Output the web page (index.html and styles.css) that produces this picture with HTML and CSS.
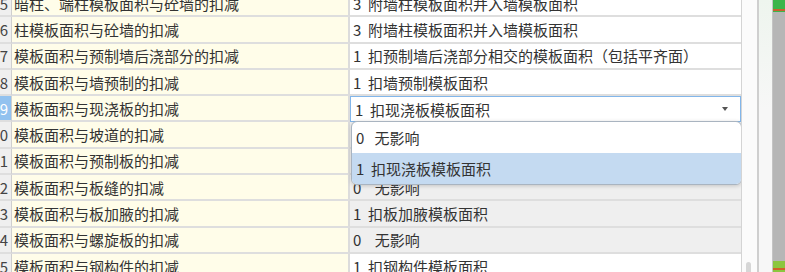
FILE: index.html
```html
<!DOCTYPE html>
<html lang="zh-CN">
<head>
<meta charset="utf-8">
<title>模板扣减设置</title>
<link rel="stylesheet" href="styles.css">
</head>
<body>
<div class="screen">
  <div class="grid">
    <div class="rows">
      <div class="row"><div class="num"><span>25</span></div><div class="name">暗柱、端柱模板面积与砼墙的扣减</div><div class="val">3  附墙柱模板面积并入墙模板面积</div></div>
      <div class="row"><div class="num"><span>26</span></div><div class="name">柱模板面积与砼墙的扣减</div><div class="val">3  附墙柱模板面积并入墙模板面积</div></div>
      <div class="row"><div class="num"><span>27</span></div><div class="name">模板面积与预制墙后浇部分的扣减</div><div class="val">1  扣预制墙后浇部分相交的模板面积（包括平齐面）</div></div>
      <div class="row"><div class="num"><span>28</span></div><div class="name">模板面积与墙预制的扣减</div><div class="val">1  扣墙预制模板面积</div></div>
      <div class="row"><div class="num active"><span>29</span></div><div class="name">模板面积与现浇板的扣减</div>
        <div class="val editing"><span class="edit-text">1  扣现浇板模板面积</span><span class="caret"></span>
          <div class="dropdown">
            <div class="opt">0   无影响</div>
            <div class="opt selected">1  扣现浇板模板面积</div>
          </div>
        </div>
      </div>
      <div class="row"><div class="num"><span>30</span></div><div class="name">模板面积与坡道的扣减</div><div class="val off">1  扣坡道模板面积</div></div>
      <div class="row"><div class="num"><span>31</span></div><div class="name">模板面积与预制板的扣减</div><div class="val off">1  扣预制板模板面积</div></div>
      <div class="row"><div class="num"><span>32</span></div><div class="name">模板面积与板缝的扣减</div><div class="val off">0    无影响</div></div>
      <div class="row"><div class="num"><span>33</span></div><div class="name">模板面积与板加腋的扣减</div><div class="val off">1  扣板加腋模板面积</div></div>
      <div class="row"><div class="num"><span>34</span></div><div class="name">模板面积与螺旋板的扣减</div><div class="val off">0    无影响</div></div>
      <div class="row"><div class="num"><span>35</span></div><div class="name">模板面积与钢构件的扣减</div><div class="val">1  扣钢构件模板面积</div></div>
    </div>
  </div>
  <div class="gutter"><div class="thumb"></div></div>
  <div class="divider"></div>
  <div class="side"></div>
  <div class="strip">
    <div class="strip-top"></div>
    <div class="strip-bottom"></div>
  </div>
</div>
</body>
</html>
```
FILE: styles.css
```css
html, body {
  margin: 0;
  padding: 0;
  background: #ffffff;
}
body {
  width: 785px;
  height: 272px;
  overflow: hidden;
  font-family: "Noto Sans CJK SC", "Microsoft YaHei", sans-serif;
  font-size: 15px;
  color: #333333;
}
.screen {
  display: flex;
  height: 272px;
}
.grid {
  width: 742px;
  flex: none;
  overflow: hidden;
  border-right: 1px solid #d4d4d4;
  box-sizing: border-box;
}
.rows {
  margin-top: -9px;
}
.row {
  display: grid;
  grid-template-columns: 12px 338px 391px;
  height: 26.3px;
}
.num, .name, .val {
  box-sizing: border-box;
  border-bottom: 2px solid #dedede;
  display: flex;
  align-items: center;
  white-space: pre;
  overflow: hidden;
}
.num {
  background: #efefef;
  border-right: 1px solid #cfcfcf;
  justify-content: flex-end;
  color: #444444;
  padding-right: 3px;
}
.num.active {
  background: #92c2ef;
  color: #ffffff;
}
.name {
  background: #fffde9;
  border-right: 2px solid #dcdcdc;
  padding-left: 2px;
}
.val {
  background: #ffffff;
  padding-left: 3px;
}
.val.off {
  background: #efefef;
}
.val.editing {
  position: relative;
  overflow: visible;
  border: 1px solid #82b6ea;
  padding-left: 4px;
  z-index: 2;
}
.caret {
  margin-left: auto;
  margin-right: 12px;
  width: 0;
  height: 0;
  border-left: 3px solid transparent;
  border-right: 3px solid transparent;
  border-top: 4px solid #555555;
}
.dropdown {
  position: absolute;
  top: 100%;
  left: 0;
  right: -2px;
  white-space: normal;
  background: #ffffff;
  border: 1px solid #a9b4c0;
  border-radius: 6px;
  box-shadow: 0 1px 4px rgba(0, 0, 0, 0.18);
  overflow: hidden;
}
.opt {
  height: 31px;
  display: flex;
  align-items: center;
  padding-left: 4px;
  white-space: pre;
}
.opt.selected {
  background: #c4daf1;
}
.gutter {
  width: 15px;
  flex: none;
  background: #fbfbfb;
  display: flex;
  flex-direction: column;
  justify-content: flex-end;
  align-items: center;
}
.thumb {
  width: 5px;
  height: 10px;
  border-radius: 3px 3px 0 0;
  background: #d6d6d6;
  margin-right: 2px;
}
.divider {
  width: 2px;
  flex: none;
  background: #cfcfcf;
}
.side {
  width: 14px;
  flex: none;
  background: linear-gradient(#eef5ee, #f7f7f7 40%, #f7f7f7);
  border-right: 1px solid #c4c4c4;
  box-sizing: border-box;
}
.strip {
  width: 12px;
  flex: none;
  background: #b6b6b6;
  display: flex;
  flex-direction: column;
  justify-content: space-between;
}
.strip-top {
  height: 12px;
  background: linear-gradient(#3cb54a 0, #3cb54a 9px, #c9612e 9px, #c9612e 11px, #3cb54a 11px);
}
.strip-bottom {
  height: 11px;
  background: linear-gradient(#8cc63f 0, #8cc63f 7px, #d0622a 7px, #d0622a 9px, #8cc63f 9px);
}
```
